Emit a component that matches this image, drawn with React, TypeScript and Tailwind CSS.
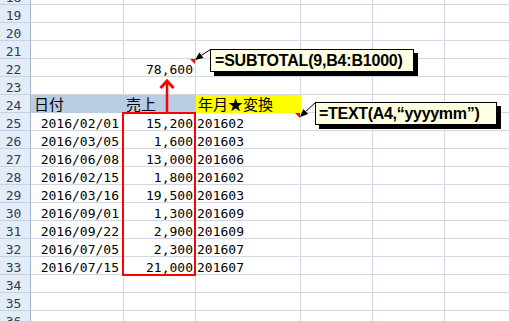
import React from "react";

type Row = {
  n: number;
  a?: string;
  b?: string;
  c?: string;
  head?: boolean;
};

const data: [string, string, string][] = [
  ["2016/02/01", "15,200", "201602"],
  ["2016/03/05", "1,600", "201603"],
  ["2016/06/08", "13,000", "201606"],
  ["2016/02/15", "1,800", "201602"],
  ["2016/03/16", "19,500", "201603"],
  ["2016/09/01", "1,300", "201609"],
  ["2016/09/22", "2,900", "201609"],
  ["2016/07/05", "2,300", "201607"],
  ["2016/07/15", "21,000", "201607"],
];

const rows: Row[] = [
  { n: 18 },
  { n: 19 },
  { n: 20 },
  { n: 21 },
  { n: 22, b: "78,600" },
  { n: 23 },
  { n: 24, head: true },
  ...data.map(([a, b, c], i) => ({ n: 25 + i, a, b, c })),
  { n: 34 },
  { n: 35 },
  { n: 36 },
];

const mono = "font-['DejaVu_Sans_Mono','Liberation_Mono',monospace] text-[13px] leading-none";
const jp = "font-['Noto_Sans_CJK_JP',sans-serif] text-[15px] leading-[15px]";

function SheetRow({ row, first }: { row: Row; first: boolean }) {
  // the top row is only partly in view, like the scrolled sheet
  const h = first ? "h-[5px] overflow-hidden" : "h-[18px]";
  return (
    <div className={`flex shrink-0 ${h}`}>
      {/* row number */}
      <div
        className={`w-[31px] shrink-0 flex items-end justify-center pr-[3px] bg-[#e4ecf7] border-r border-b border-r-[#9eb6ce] border-b-[#c3d1e2] text-[#2b3f52] ${mono}`}
      >
        {row.n}
      </div>

      {row.head ? (
        <>
          <div className={`w-[93px] shrink-0 flex items-end pl-[3px] pb-[1px] bg-[#b8cce4] border-r border-b border-[#b8cce4] text-black ${jp}`}>
            日付
          </div>
          <div className={`w-[72px] shrink-0 flex items-end pl-[2px] pb-[1px] bg-[#b8cce4] border-r border-b border-[#b8cce4] text-black ${jp}`}>
            売上
          </div>
          <div className={`w-[105px] shrink-0 flex items-end pl-[2px] pb-[1px] bg-[#ffff00] border-r border-b border-[#ffff00] text-black ${jp}`}>
            年月★変換
          </div>
        </>
      ) : (
        <>
          <div className={`w-[93px] shrink-0 flex items-end justify-end pr-[4px] border-r border-b border-[#d0d7e5] text-black ${mono}`}>
            {row.a}
          </div>
          <div className={`w-[72px] shrink-0 flex items-end justify-end pr-[2px] border-r border-b border-[#d0d7e5] text-black ${mono}`}>
            {row.b}
          </div>
          <div className={`w-[105px] shrink-0 flex items-end pl-[1px] border-r border-b border-[#d0d7e5] text-black ${mono}`}>
            {row.c}
          </div>
        </>
      )}

      <div className="w-[72px] shrink-0 border-r border-b border-[#d0d7e5]" />
      <div className="w-[72px] shrink-0 border-r border-b border-[#d0d7e5]" />
      <div className="w-[72px] shrink-0 border-r border-b border-[#d0d7e5]" />
    </div>
  );
}

export default function App() {
  return (
    <div className="relative w-[509px] h-[321px] overflow-hidden bg-white">
      <div className="flex flex-col">
        {rows.map((r, i) => (
          <SheetRow key={r.n} row={r} first={i === 0} />
        ))}
      </div>

      {/* red frame around the sales column */}
      <div className="absolute left-[122px] top-[112px] w-[74px] h-[164px] border-2 border-[#ff0000]" />

      {/* indicators, comment connectors, red arrow */}
      <svg className="absolute inset-0 pointer-events-none" width={509} height={321}>
        <polygon points="190,59 195,59 195,64" fill="#ff0000" />
        <polygon points="295,113 300,113 300,118" fill="#ff0000" />

        <line x1={210.5} y1={49.5} x2={201.5} y2={55.3} stroke="#000" strokeWidth={1} />
        <polygon points="195,60 203.5,58.1 199.4,52.4" fill="#000" />

        <line x1={315.5} y1={102.5} x2={305.7} y2={111.5} stroke="#000" strokeWidth={1} />
        <polygon points="300,117 308.2,114 303.3,108.9" fill="#000" />

        <line x1={167} y1={83} x2={167} y2={112} stroke="#ff0000" strokeWidth={2.5} />
        <polyline points="160.5,88 167,81 173.5,88" fill="none" stroke="#ff0000" strokeWidth={3} />
      </svg>

      {/* comment boxes */}
      <div className="absolute left-[210px] top-[49px] w-[204px] h-[23px] border border-black bg-[#ffffe1] shadow-[4px_4px_0_0_#000] pl-[4px] font-['Liberation_Sans',Arial,sans-serif] font-bold text-[16px] leading-[21px] tracking-[-0.2px] text-black whitespace-nowrap">
        =SUBTOTAL(9,B4:B1000)
      </div>
      <div className="absolute left-[315px] top-[102px] w-[182px] h-[23px] border border-black bg-[#ffffe1] shadow-[4px_4px_0_0_#000] pl-[3px] font-['Liberation_Sans',Arial,sans-serif] font-bold text-[16px] leading-[21px] tracking-[-0.3px] text-black whitespace-nowrap">
        =TEXT(A4,“yyyymm”)
      </div>
    </div>
  );
}
